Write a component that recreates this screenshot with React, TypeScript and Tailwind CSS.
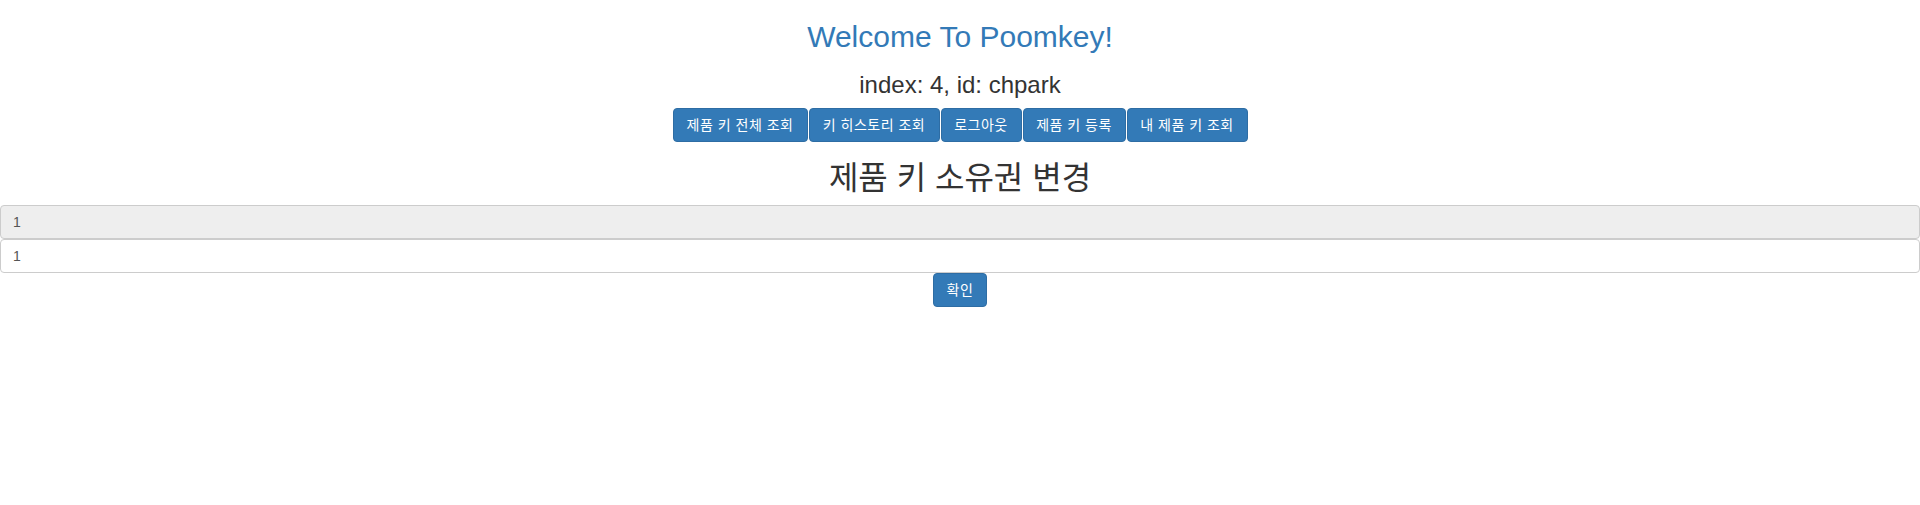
import React from "react";

const FONT = { fontFamily: '"Liberation Sans", "Noto Sans CJK KR", sans-serif' };

// widths measured from the reference (Malgun Gothic is wider than Noto CJK)
const menu = [
  { label: "제품 키 전체 조회", w: "w-[135px]" },
  { label: "키 히스토리 조회", w: "w-[131px]" },
  { label: "로그아웃", w: "w-[81px]" },
  { label: "제품 키 등록", w: "w-[103px]" },
  { label: "내 제품 키 조회", w: "w-[121px]" },
];

function Btn({ children, className = "" }: { children: React.ReactNode; className?: string }) {
  return (
    <button
      type="button"
      className={`h-[34px] px-0 rounded-[4px] border border-[#2e6da4] bg-[#337ab7] text-white text-sm leading-5 tracking-[0.5px] whitespace-nowrap ${className}`}
    >
      {children}
    </button>
  );
}

export default function App() {
  return (
    <div style={FONT} className="min-h-[505px] bg-white text-[#333] text-sm text-center">
      <h2 className="pt-5 text-[30px] leading-[33px] text-[#337ab7]">Welcome To Poomkey!</h2>
      <h3 className="mt-[19px] text-2xl leading-[26px]">index: 4, id: chpark</h3>

      <div className="mt-2.5 flex justify-center gap-px">
        {menu.map((m) => (
          <Btn key={m.label} className={m.w}>
            {m.label}
          </Btn>
        ))}
      </div>

      {/* 소유권 변경 폼 */}
      <h2 className="mt-5 text-[32px] leading-[33px]">제품 키 소유권 변경</h2>
      <form className="mt-2.5 flex flex-col items-center" onSubmit={(e) => e.preventDefault()}>
        <input
          readOnly
          defaultValue="1"
          className="w-full h-[34px] px-3 rounded-[4px] border border-[#ccc] bg-[#eee] text-[#555] text-sm outline-none"
        />
        <input
          defaultValue="1"
          className="w-full h-[34px] px-3 rounded-[4px] border border-[#ccc] bg-white text-[#555] text-sm outline-none"
        />
        <Btn className="w-[54px]">확인</Btn>
      </form>
    </div>
  );
}
